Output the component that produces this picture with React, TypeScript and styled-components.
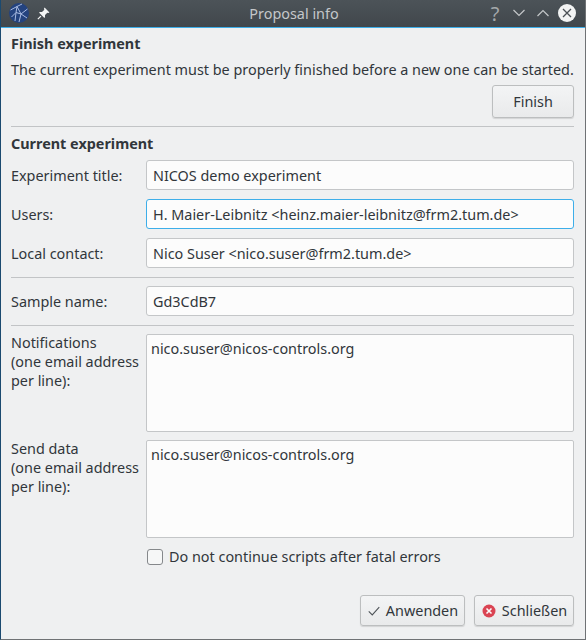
import React from 'react'
import styled, { createGlobalStyle } from 'styled-components'

const Global = createGlobalStyle`
  html, body { margin: 0; padding: 0; background: #eff0f1; }
  * { box-sizing: border-box; }
`

const Window = styled.div`
  width: 586px;
  height: 640px;
  display: flex;
  flex-direction: column;
  overflow: hidden;
  background: #eff0f1;
  border-left: 1px solid #1b4a70;
  border-right: 1px solid #6f7275;
  border-bottom: 1px solid #6f7275;
  font-family: "Noto Sans", sans-serif;
  font-size: 14.4px;
  color: #31363b;
`

const TitleBar = styled.div`
  height: 28px;
  flex: none;
  display: flex;
  align-items: center;
  padding: 0 7px 1px 9px;
  background: linear-gradient(#4c5358, #41474c);
  border-bottom: 1px solid #3daee9;
  margin: 0 -1px;
`

const TitleIcons = styled.div`
  width: 100px;
  display: flex;
  align-items: center;
  gap: 8px;
`

const TitleText = styled.div`
  flex: 1;
  text-align: center;
  color: #c4c7c9;
  white-space: nowrap;
`

const TitleButtons = styled.div`
  width: 100px;
  display: flex;
  align-items: center;
  justify-content: flex-end;
`

const TitleButton = styled.span`
  width: 24px;
  height: 20px;
  display: flex;
  align-items: center;
  justify-content: center;
  color: #a4a8ab;
  font-size: 20px;
`

const Content = styled.div`
  flex: 1;
  display: flex;
  flex-direction: column;
  padding: 7px 11px 0 10px;
`

const Heading = styled.div`
  font-weight: 700;
  line-height: 18px;
`

const Paragraph = styled.div`
  line-height: 18px;
  margin-top: 8px;
  white-space: nowrap;
`

const FinishRow = styled.div`
  display: flex;
  justify-content: flex-end;
  margin-top: 6px;
`

const Button = styled.button<{ $w: number; $h: number }>`
  width: ${p => p.$w}px;
  height: ${p => p.$h}px;
  display: flex;
  align-items: center;
  justify-content: center;
  gap: 5px;
  padding: 0;
  font: inherit;
  color: #31363b;
  background: linear-gradient(#f3f4f5, #e9eaeb);
  border: 1px solid #bcbebf;
  border-radius: 3px;
  box-shadow: 0 1px 1px rgba(0, 0, 0, 0.12);
`

const Divider = styled.div<{ $top: number; $bottom: number }>`
  height: 1px;
  background: #c2c4c6;
  margin: ${p => p.$top}px 0 ${p => p.$bottom}px;
`

const Row = styled.div<{ $top?: number }>`
  display: flex;
  align-items: center;
  margin-top: ${p => p.$top ?? 0}px;
`

const TopRow = styled(Row)`
  align-items: flex-start;
`

const Label = styled.label`
  width: 135px;
  flex: none;
  line-height: 19px;
  white-space: nowrap;
`

const AreaLabel = styled(Label)`
  margin-top: -1px;
`

const Input = styled.div<{ $focus?: boolean }>`
  flex: 1;
  height: 30px;
  display: flex;
  align-items: center;
  padding: 0 6px;
  background: #fcfcfc;
  border: 1px solid ${p => (p.$focus ? '#3daee9' : '#c4c6c8')};
  border-radius: 3px;
  white-space: pre;
`

const TextArea = styled.div`
  flex: 1;
  height: 98px;
  padding: 4px 4px;
  line-height: 19px;
  background: #fcfcfc;
  border: 1px solid #c4c6c8;
  border-radius: 2px;
`

const CheckRow = styled.div`
  display: flex;
  align-items: center;
  gap: 6px;
  margin: 9px 0 0 136px;
  height: 19px;
`

const CheckBox = styled.span`
  width: 16px;
  height: 16px;
  background: #f6f7f7;
  border: 1px solid #85888b;
  border-radius: 3px;
`

const Footer = styled.div`
  display: flex;
  justify-content: flex-end;
  gap: 9px;
  margin-top: 29px;
`

const Check = () => (
  <svg width="14" height="14" viewBox="0 0 16 16" fill="none" stroke="#4d5257" strokeWidth="1.2">
    <path d="M2 8.5 L6 12.5 L14 3.5" />
  </svg>
)

const CloseIcon = () => (
  <svg width="16" height="16" viewBox="0 0 16 16">
    <circle cx="8" cy="8" r="6.5" fill="#da4453" />
    <path d="M5.5 5.5 L10.5 10.5 M10.5 5.5 L5.5 10.5" stroke="#fcfcfc" strokeWidth="1.6" />
  </svg>
)

const Logo = () => (
  <svg width="20" height="20" viewBox="0 0 20 20" fill="none">
    <circle cx="10" cy="10" r="10" fill="#24437f" />
    <path
      d="M1.5 7 L8 3.5 L13 1 M8 3.5 L12 11 L18.5 6 M12 11 L10 19 M12 11 L18 15 M2.5 14 L7 9.5 L12 11 M7 9.5 L8 3.5 M7 9.5 L6 18"
      stroke="#a9bbe2"
      strokeWidth="1"
    />
  </svg>
)

const Pin = () => (
  <svg width="13" height="13" viewBox="0 0 12 12">
    <path d="M7 0.5 L11.5 5 L10.5 5.6 L9.5 5.2 L7.4 7.4 L7.4 9.6 L6.6 10 L2 5.4 L2.4 4.6 L4.6 4.6 L6.8 2.5 L6.4 1.5 Z" fill="#f4f5f5" />
    <path d="M3.6 8.4 L0.8 11.2" stroke="#f4f5f5" strokeWidth="1.2" />
  </svg>
)

const Chevron = ({ up }: { up?: boolean }) => (
  <svg width="12" height="8" viewBox="0 0 12 8" fill="none" stroke="#c4c7c9" strokeWidth="1.2">
    <path d={up ? 'M0.5 7 L6 1.5 L11.5 7' : 'M0.5 1 L6 6.5 L11.5 1'} />
  </svg>
)

const WindowClose = () => (
  <svg width="18" height="18" viewBox="0 0 18 18">
    <circle cx="9" cy="9" r="9" fill="#f2f3f3" />
    <path d="M5 5 L13 13 M13 5 L5 13" stroke="#4a5055" strokeWidth="1.3" />
  </svg>
)

export default function App() {
  return (
    <>
      <Global />
      <Window>
        <TitleBar>
          <TitleIcons>
            <Logo />
            <Pin />
          </TitleIcons>
          <TitleText>Proposal info</TitleText>
          <TitleButtons>
            <TitleButton>?</TitleButton>
            <TitleButton><Chevron /></TitleButton>
            <TitleButton><Chevron up /></TitleButton>
            <TitleButton><WindowClose /></TitleButton>
          </TitleButtons>
        </TitleBar>
        <Content>
          <Heading>Finish experiment</Heading>
          <Paragraph>The current experiment must be properly finished before a new one can be started.</Paragraph>
          <FinishRow>
            <Button $w={82} $h={33}>Finish</Button>
          </FinishRow>
          <Divider $top={8} $bottom={8} />
          <Heading>Current experiment</Heading>
          <Row $top={7}>
            <Label>Experiment title:</Label>
            <Input>NICOS demo experiment</Input>
          </Row>
          <Row $top={9}>
            <Label>Users:</Label>
            <Input $focus>{'H. Maier-Leibnitz <heinz.maier-leibnitz@frm2.tum.de>'}</Input>
          </Row>
          <Row $top={9}>
            <Label>Local contact:</Label>
            <Input>{'Nico Suser <nico.suser@frm2.tum.de>'}</Input>
          </Row>
          <Divider $top={9} $bottom={8} />
          <Row>
            <Label>Sample name:</Label>
            <Input>Gd3CdB7</Input>
          </Row>
          <Divider $top={9} $bottom={8} />
          <TopRow>
            <AreaLabel>
              Notifications
              <br />
              (one email address
              <br />
              per line):
            </AreaLabel>
            <TextArea>nico.suser@nicos-controls.org</TextArea>
          </TopRow>
          <TopRow $top={8}>
            <AreaLabel>
              Send data
              <br />
              (one email address
              <br />
              per line):
            </AreaLabel>
            <TextArea>nico.suser@nicos-controls.org</TextArea>
          </TopRow>
          <CheckRow>
            <CheckBox />
            Do not continue scripts after fatal errors
          </CheckRow>
          <Footer>
            <Button $w={105} $h={31}>
              <Check />
              Anwenden
            </Button>
            <Button $w={100} $h={31}>
              <CloseIcon />
              Schließen
            </Button>
          </Footer>
        </Content>
      </Window>
    </>
  )
}
